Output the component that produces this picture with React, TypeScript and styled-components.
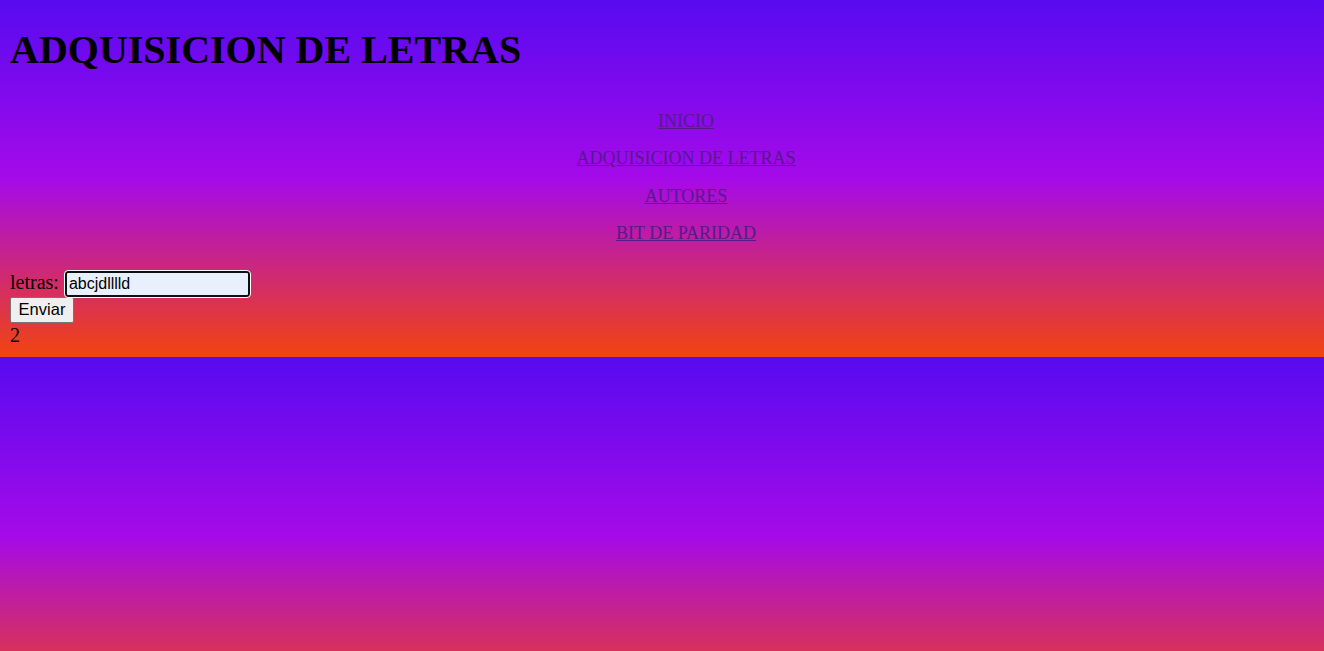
import React from "react";
import styled, { createGlobalStyle } from "styled-components";

const GlobalStyle = createGlobalStyle`
  html {
    background: linear-gradient(to bottom, #580af0 0%, #a50ae9 50%, #f2440f 100%);
  }
  body {
    margin: 10px 10px 10px;
    font-family: "Liberation Serif", "Times New Roman", serif;
    font-size: 16px;
    color: #000;
  }
`;

const Title = styled.h1`
  font-size: 40px;
  font-weight: bold;
  margin: 17px 0 0;
  line-height: 46px;
`;

const Nav = styled.ul`
  list-style: none;
  margin: 0;
  padding: 38px 0 0 48px;
  display: flex;
  flex-direction: column;
  align-items: center;
  gap: 16.6px;
  font-size: 18px;
`;

const NavItem = styled.li`
  line-height: 20.7px;
`;

const NavLink = styled.a`
  color: #551a8b;
  text-decoration: underline;
`;

const Form = styled.form`
  margin: 27px 0 0;
`;

const Label = styled.label`
  font-size: 20px;
`;

const TextInput = styled.input`
  font-family: Arial, "Liberation Sans", sans-serif;
  font-size: 16px;
  width: 185px;
  height: 26px;
  box-sizing: border-box;
  padding: 1px 2px;
  background: #e8f0fe;
  border: 2px solid #101010;
  border-radius: 3px;
  outline: 1px solid #ffffff;
  margin: 0 0 0 6px;
  vertical-align: baseline;
`;

const Button = styled.button`
  font-family: Arial, "Liberation Sans", sans-serif;
  font-size: 16.5px;
  height: 26px;
  width: 64px;
  padding: 1px 6px;
  background: #efefef;
  border: 1px solid #767676;
  border-radius: 2px;
  color: #000;
  display: block;
  margin-top: 0;
`;

const Result = styled.div`
  font-size: 20px;
  line-height: 24px;
`;

export default function App() {
  return (
    <>
      <GlobalStyle />
      <Title>ADQUISICION DE LETRAS</Title>
      <Nav>
        <NavItem><NavLink href="#">INICIO</NavLink></NavItem>
        <NavItem><NavLink href="#">ADQUISICION DE LETRAS</NavLink></NavItem>
        <NavItem><NavLink href="#">AUTORES</NavLink></NavItem>
        <NavItem><NavLink href="#">BIT DE PARIDAD</NavLink></NavItem>
      </Nav>
      <Form onSubmit={(e) => e.preventDefault()}>
        <Label>letras:</Label>
        <TextInput type="text" defaultValue="abcjdlllld" spellCheck={false} />
        <Button type="submit">Enviar</Button>
      </Form>
      <Result>2</Result>
    </>
  );
}
